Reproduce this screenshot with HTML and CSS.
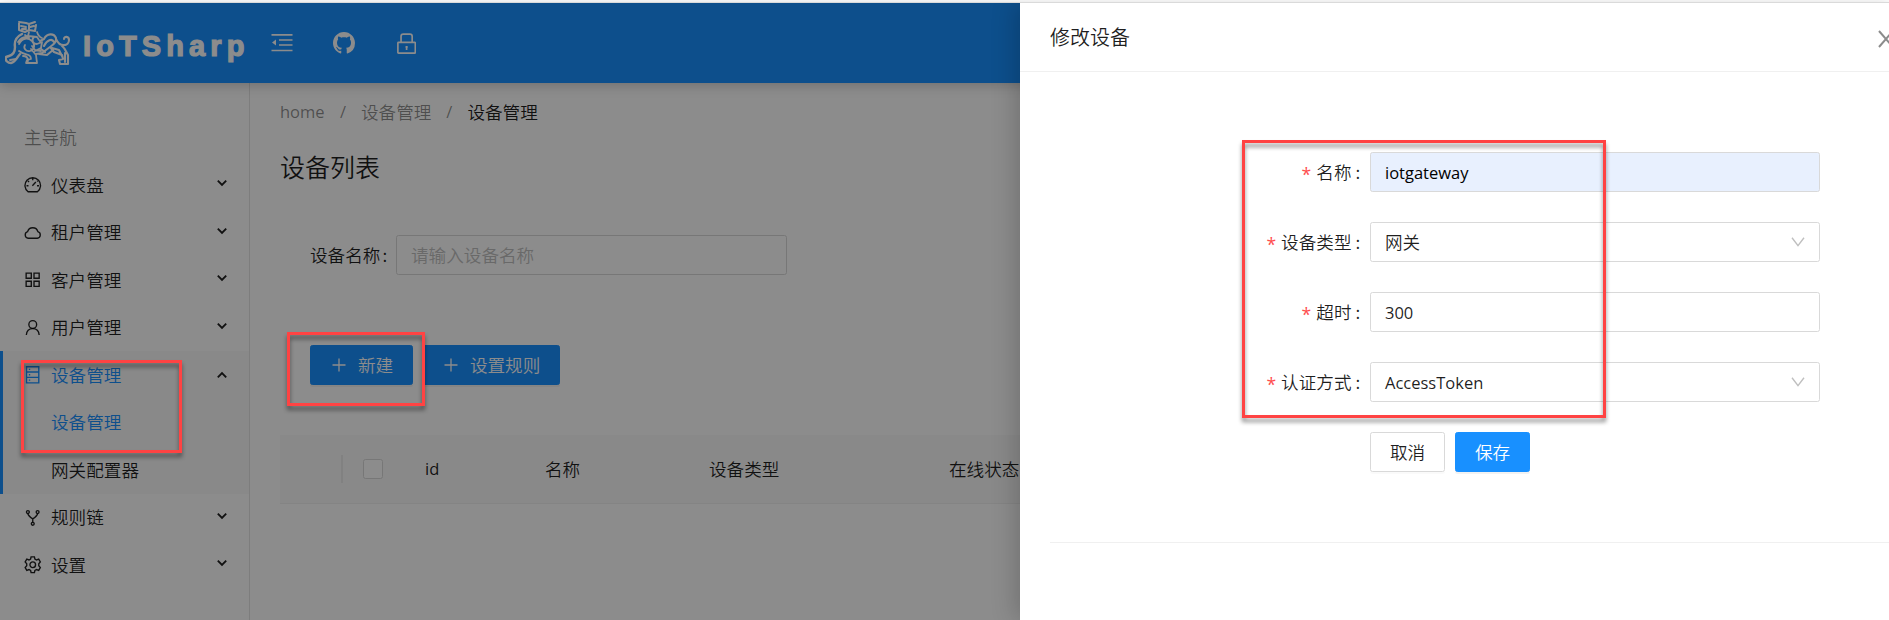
FILE: index.html
```html
<!DOCTYPE html>
<html lang="zh-CN">
<head>
<meta charset="utf-8">
<title>IoTSharp</title>
<link rel="stylesheet" href="styles.css">
</head>
<body>
<svg class="defs" width="0" height="0">
  <symbol id="chev" viewBox="0 0 12 12"><path d="M1.8 3.6 6 7.8l4.2-4.2" fill="none" stroke="currentColor" stroke-width="1.9"/></symbol>
  <symbol id="plus" viewBox="0 0 14 14"><path d="M7 .5v13M.5 7h13" fill="none" stroke="currentColor" stroke-width="1.3"/></symbol>
  <symbol id="down" viewBox="0 0 14 10"><path d="M1 .8 7 8.6 13 .8" fill="none" stroke="currentColor" stroke-width="1.4"/></symbol>
</svg>
<div class="app">
  <header class="header">
    <svg class="beast" viewBox="0 0 66 46" fill="none" stroke="#fff" stroke-linecap="round" stroke-linejoin="round">
      <path stroke-width="2" d="M14 2l7 1 3 1 6-2M14 3v7l6 2 4-2 6 1 1-6M16 6l5 1M25 7l4-1M17 9l4 0M24 4v5"/>
      <path stroke-width="2.4" d="M17 14c-6 3-8 7-7 13 0 4-2 8-6 9l-3 1c-1 4 2 6 5 6 5-1 6-6 9-9"/>
      <path stroke-width="1.8" d="M24 12l-1 4 9 1 2 3M20 15l4 3M14 24c3-6 9-7 13-3s2 9-2 10-7-3-5-6M13 22c2-3 5-5 9-5M14 31c6 5 12 2 12 8l-4 1-1 3h11l-1-8-5-6M18 36c4 0 5 3 5 5M29 17c-3 3-1 7 3 7l5-2-1 6-6 3M32 12c1 3 2 5 5 6M27 26l3 4 6 1M5 40l6-1"/>
      <path stroke-width="2.1" d="M35 21l4-2c3-6 10-6 12-1 1 4-3 7-6 9l-8 6-6 1M39 26c3-6 8-8 10-4M51 19c4 9 13 7 13 1 0-4-5-4-5-1M57 26c3 2 4 6 6 9v9h-8l-1-4 4-1-1-4-8-3-3-4M47 28l7 2 3 6M60 33v9M34 34l8 1 6-5M36 29l4 3"/>
    </svg>
    <span class="brand">IoTSharp</span>
    <svg class="hicon" viewBox="0 0 22 20" fill="none" stroke="#fff" stroke-width="1.7"><path d="M.5 1.8h21M8 7h13.5M8 12h13.5M.5 17.5h21"/><path d="M5 6.6v6L1 9.6z" fill="#fff" stroke="none"/></svg>
    <svg class="hicon git" viewBox="0 0 16 16" fill="#fff"><path d="M8 0C3.58 0 0 3.58 0 8c0 3.54 2.29 6.53 5.47 7.59.4.07.55-.17.55-.38 0-.19-.01-.82-.01-1.49-2.01.37-2.53-.49-2.69-.94-.09-.23-.48-.94-.82-1.13-.28-.15-.68-.52-.01-.53.63-.01 1.08.58 1.23.82.72 1.21 1.87.87 2.33.66.07-.52.28-.87.51-1.07-1.78-.2-3.64-.89-3.64-3.95 0-.87.31-1.59.82-2.15-.08-.2-.36-1.02.08-2.12 0 0 .67-.21 2.2.82.64-.18 1.32-.27 2-.27s1.36.09 2 .27c1.53-1.04 2.2-.82 2.2-.82.44 1.1.16 1.92.08 2.12.51.56.82 1.27.82 2.15 0 3.07-1.87 3.75-3.65 3.95.29.25.54.73.54 1.48 0 1.07-.01 1.93-.01 2.2 0 .21.15.46.55.38A8.01 8.01 0 0 0 16 8c0-4.42-3.58-8-8-8z"/></svg>
    <svg class="hicon lock" viewBox="0 0 18 20" fill="none" stroke="#fff" stroke-width="1.6"><rect x=".8" y="9" width="16.6" height="10.2" rx=".6"/><path d="M3.8 9V3.2Q3.8 1 6 1h6.2q2.2 0 2.2 2.2V9M9.1 12.3v3.8M8 13.3h2.2"/></svg>
  </header>
  <div class="body">
    <nav class="side">
      <div class="group">主导航</div>
      <div class="row"><svg class="ic" viewBox="0 0 18 18"><path d="M4.2 16.2a8 8 0 1 1 9.6 0zM8.6 10l3.6-3.8M9 2.3v2M4 5l1.2 1.2M14 5l-.6.6M2.6 10h2M13.4 10h2"/></svg><span>仪表盘</span><svg class="ch"><use href="#chev"/></svg></div>
      <div class="row"><svg class="ic" viewBox="0 0 18 18"><path d="M4.3 14.7a3.5 3.5 0 0 1-.6-6.8C4.500 5.200 6.500 3.900 9 3.900s4.500 1.300 5.300 4a3.500 3.500 0 0 1-.6 6.800z"/></svg><span>租户管理</span><svg class="ch"><use href="#chev"/></svg></div>
      <div class="row"><svg class="ic" viewBox="0 0 18 18"><path d="M2.200 2.200h5.300v5.300H2.200zM10.300 2.200h5.300v5.300h-5.300zM2.200 10.500h5.300v5.300H2.200zM10.300 10.500h5.300v5.300h-5.300z"/></svg><span>客户管理</span><svg class="ch"><use href="#chev"/></svg></div>
      <div class="row"><svg class="ic" viewBox="0 0 18 18"><circle cx="9" cy="5.700" r="4"/><path d="M2.400 16.500C2.700 12.300 5.300 9.900 9 9.900s6.300 2.400 6.600 6.600"/></svg><span>用户管理</span><svg class="ch"><use href="#chev"/></svg></div>
      <div class="open">
        <div class="row on"><svg class="ic" viewBox="0 0 18 18"><path d="M2.600.8h12.600v16.600H2.600zM2.600 6.200h12.600M2.600 11.700h12.600M5 3.500h1.400M5 9h1.400M5 14.500h1.400"/></svg><span>设备管理</span><svg class="ch up"><use href="#chev"/></svg></div>
        <div class="row sub on">设备管理</div>
        <div class="row sub">网关配置器</div>
      </div>
      <div class="row"><svg class="ic" viewBox="0 0 18 18"><circle cx="4" cy="3.200" r="1.500"/><circle cx="14" cy="3.200" r="1.500"/><circle cx="9" cy="15.200" r="1.500"/><path d="M4 4.800Q4.300 7 9 10.200 13.700 7 14 4.800M9 10v3.600"/></svg><span>规则链</span><svg class="ch"><use href="#chev"/></svg></div>
      <div class="row"><svg class="ic" viewBox="0 0 18 18"><circle cx="9" cy="9" r="2.900"/><path d="M7.300.9h3.400l.5 2.200 1.700 1 2.200-.8 1.700 2.900-1.600 1.700v2.200l1.600 1.700-1.700 2.900-2.200-.8-1.700 1-.5 2.200H7.300l-.5-2.200-1.700-1-2.200.8-1.700-2.900 1.600-1.700V7.900L1.200 6.200l1.700-2.900 2.200.8 1.700-1z"/></svg><span>设置</span><svg class="ch"><use href="#chev"/></svg></div>
    </nav>
    <main class="main">
      <div class="crumbs"><span class="lat">home</span><i>/</i><span>设备管理</span><i>/</i><b>设备管理</b></div>
      <h1>设备列表</h1>
      <div class="search"><label>设备名称<span class="colon">:</span></label><div class="input ph">请输入设备名称</div></div>
      <div class="btns"><div class="btn blue"><svg><use href="#plus"/></svg>新建</div><div class="btn blue"><svg><use href="#plus"/></svg>设置规则</div></div>
      <div class="thead"><i class="sep"></i><i class="box"></i><span class="c1 lat">id</span><span class="c2">名称</span><span class="c3">设备类型</span><span class="c4">在线状态</span></div>
    </main>
  </div>
</div>
<div class="mask"></div>
<section class="drawer">
  <div class="dhead"><span>修改设备</span><svg class="close" viewBox="0 0 18 18"><path d="M2 1l14 16M16 1L2 17" fill="none" stroke="#8c8c8c" stroke-width="2"/></svg></div>
  <div class="form">
    <label><em>*</em>名称<u>:</u></label><div class="input fill lat">iotgateway</div>
    <label><em>*</em>设备类型<u>:</u></label><div class="input"><span>网关</span><svg class="dn"><use href="#down"/></svg></div>
    <label><em>*</em>超时<u>:</u></label><div class="input lat">300</div>
    <label><em>*</em>认证方式<u>:</u></label><div class="input"><span class="lat">AccessToken</span><svg class="dn"><use href="#down"/></svg></div>
    <div></div><div class="acts"><div class="btn">取消</div><div class="btn blue">保存</div></div>
  </div>
  <div class="rule"></div>
</section>
<div class="mark m1"></div><div class="mark m2"></div><div class="mark m3"></div>
</body>
</html>
```

FILE: styles.css
```css
* { box-sizing: border-box; }
body {
  margin: 0; width: 1889px; height: 620px; overflow: hidden; position: relative;
  background: #fff; color: rgba(0,0,0,.88);
  font: 350 17.6px/26px "Noto Sans CJK SC", sans-serif;
}
.defs { position: absolute; }
.lat, .crumbs i { font-family: "Open Sans", sans-serif; font-weight: 400; font-size: 16.5px; }
i, em { font-style: normal; }
.app { padding-top: 3px; height: 620px; display: flex; flex-direction: column; }
.header {
  height: 80px; flex: none; background: #1890ff; display: flex; align-items: center;
  box-shadow: 0 2px 12px rgba(0,0,0,.22); position: relative; padding-left: 5px;
}
.beast { width: 66px; height: 46px; margin-right: 12px; }
.brand {
  font: bold 29px/40px "Liberation Sans", sans-serif; letter-spacing: 5.1px; color: #fff;
  -webkit-text-stroke: 1.2px #fff; width: 188px; margin-top: 5px;
}
.hicon { width: 22px; height: 20px; margin: 0 40px 0 0; }
.git { width: 22px; height: 22px; margin-right: 42px; }
.lock { width: 19px; height: 21px; }
.body { display: flex; flex: 1; }
.side { width: 250px; flex: none; border-right: 1px solid #e4e4e4; padding-top: 41px; }
.group { padding-left: 24px; color: rgba(0,0,0,.45); height: 37px; }
.row { height: 47.5px; display: flex; align-items: center; padding: 0 21px 0 24px; }
.row span { flex: 1; }
.ic { width: 17.5px; height: 17.5px; margin-right: 9.5px; fill: none; stroke: currentColor; stroke-width: 1.4; }
.ch { width: 12px; height: 12px; margin-top: -3px; }
.ch.up { transform: rotate(180deg); margin-top: 0; }
.open { background: #fafafa; box-shadow: inset 3px 0 #1890ff; }
.on span, .on .ic, .sub.on { color: #1890ff; }
.sub { padding-left: 51px; }
.main { flex: 1; padding: 15px 0 0 30px; }
.crumbs { display: flex; color: rgba(0,0,0,.45); height: 27px; align-items: center; }
.crumbs .lat { width: 45px; }
.crumbs i { width: 36px; text-align: center; }
.crumbs b { font-weight: 350; color: rgba(0,0,0,.9); }
h1 { margin: 22px 0 0; font-size: 25px; line-height: 38px; font-weight: 350; height: 50px; }
.search { display: flex; align-items: center; padding: 0 0 0 30px; margin-top: 38px; }
.search label { width: 86px; }
.colon { margin-left: 2px; }
.input {
  width: 391px; height: 40px; border: 1px solid #d9d9d9; border-radius: 2.5px; padding: 0 14px;
  display: flex; align-items: center; background: #fff;
}
.ph { color: #bfbfbf; }
.btns { display: flex; gap: 9px; margin: 70px 0 0 30px; }
.btn {
  height: 40px; border-radius: 2.5px; border: 1px solid #d9d9d9; padding: 0 18.900px;
  display: flex; align-items: center; box-shadow: 0 2px 0 rgba(0,0,0,.02);
}
.btn.blue { background: #1890ff; border-color: #1890ff; color: #fff; box-shadow: 0 2px 0 rgba(0,0,0,.05); }
.btns svg { width: 14px; height: 14px; margin: 0 12px 0 2px; }
.thead {
  margin-top: 50px; height: 69px; background: #fafafa; border-bottom: 1px solid #f0f0f0;
  display: flex; align-items: center; padding-left: 61px;
}
.sep { width: 2px; height: 28px; background: #ececec; margin-right: 20px; }
.box { width: 20px; height: 20px; border: 1px solid #d9d9d9; border-radius: 2.5px; background: #fff; margin-right: 42px; }
.c1 { width: 120px; } .c2 { width: 164px; } .c3 { width: 240px; }
.mask { position: absolute; inset: 3px 0 0 0; background: rgba(0,0,0,.45); }
body::before { content: ""; position: absolute; z-index: 3; top: 2px; left: 0; right: 0; height: 1px; background: #dadada; }
.drawer {
  position: absolute; left: 1020px; top: 3px; width: 869px; bottom: 0; background: #fff;
  box-shadow: -4px 0 24px rgba(0,0,0,.2); clip-path: inset(0 0 0 -60px);
}
.dhead {
  height: 69px; border-bottom: 1px solid #f0f0f0; display: flex; align-items: center;
  justify-content: space-between; padding-left: 30px; font-size: 20px; overflow: hidden;
}
.close { width: 18px; height: 18px; flex: none; margin: 3px -6px 0 0; }
.form { display: grid; grid-template-columns: 350px 450px; row-gap: 30px; padding-top: 80px; }
.form label { display: flex; justify-content: flex-end; align-items: center; }
.form u { text-decoration: none; width: 18.500px; padding-left: 4px; }
.form em { color: #ff4d4f; font-family: "Open Sans", sans-serif; font-weight: 400; margin-right: 5px; padding-top: 3px; }
.form .input { width: 450px; justify-content: space-between; }
.form .fill { background: #e8f0fe; color: #000; }
.form .lat { padding-top: 1px; }
.dn { width: 14px; height: 10px; color: #bfbfbf; margin-top: -1px; }
.acts { display: flex; gap: 10px; }
.rule { margin: 70px 0 0 30px; border-top: 1px solid #f0f0f0; }
.mark { position: absolute; border: 3px solid #ff4343; filter: drop-shadow(0 4px 2px rgba(0,0,0,.45)); }
.m1 { left: 21px; top: 360px; width: 161px; height: 93px; }
.m2 { left: 287px; top: 332px; width: 138px; height: 74px; }
.m3 { left: 1242px; top: 140px; width: 364px; height: 278px; }
```
